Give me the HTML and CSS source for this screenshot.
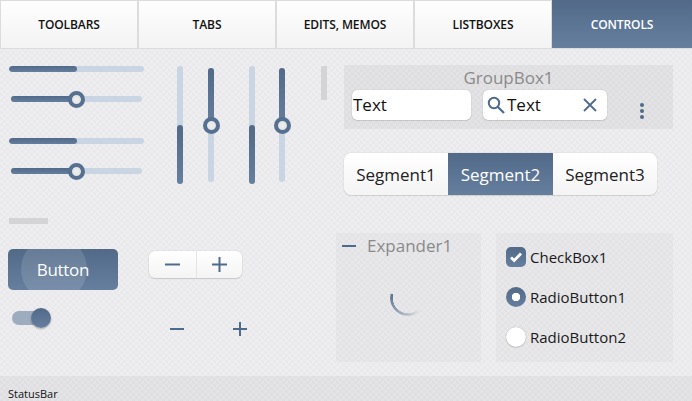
FILE: index.html
```html
<!DOCTYPE html>
<html lang="en">
<head>
<meta charset="utf-8">
<title>Controls</title>
<link rel="stylesheet" href="styles.css">
</head>
<body>
<div class="page">
  <nav class="tabs">
    <div class="tab">TOOLBARS</div>
    <div class="tab">TABS</div>
    <div class="tab">EDITS, MEMOS</div>
    <div class="tab">LISTBOXES</div>
    <div class="tab tab-active">CONTROLS</div>
  </nav>
  <main class="main">
    <section class="top-row">
      <div class="hsliders">
        <div class="progress-h"><div class="fill fill-h"></div></div>
        <div class="slider-h"><div class="fill fill-s"></div><div class="thumb"></div></div>
        <div class="progress-h gap-a"><div class="fill fill-h"></div></div>
        <div class="slider-h gap-b"><div class="fill fill-s"></div><div class="thumb"></div></div>
      </div>
      <div class="progress-v first"><div class="fill fill-v"></div></div>
      <div class="slider-v s1"><div class="fill fill-t"></div><div class="thumb"></div></div>
      <div class="progress-v p2"><div class="fill fill-v"></div></div>
      <div class="slider-v s2"><div class="fill fill-t"></div><div class="thumb"></div></div>
      <div class="scroll-v"></div>
      <div class="right-top">
        <div class="groupbox">
          <div class="group-title">GroupBox1</div>
          <div class="group-row">
            <div class="edit">Text</div>
            <div class="edit search">
              <svg class="search-ico" viewBox="0 0 18 18" width="18" height="18"><circle cx="7" cy="7" r="5.2" fill="none" stroke="#4f6b8c" stroke-width="2"/><path d="M11 11l6 6" stroke="#4f6b8c" stroke-width="2.2" fill="none"/></svg>
              <span>Text</span>
              <svg class="clear-ico" viewBox="0 0 14 14" width="14" height="14"><path d="M1 1l12 12M13 1L1 13" stroke="#4f6b8c" stroke-width="1.8" fill="none"/></svg>
            </div>
            <div class="kebab"><i></i><i></i><i></i></div>
          </div>
        </div>
        <div class="segments">
          <div class="seg">Segment1</div>
          <div class="seg seg-active">Segment2</div>
          <div class="seg">Segment3</div>
        </div>
      </div>
    </section>
    <section class="bottom-row">
      <div class="col-left">
        <div class="scroll-h"></div>
        <div class="button"><span>Button</span></div>
        <div class="switch"><div class="switch-thumb"></div></div>
      </div>
      <div class="col-mid">
        <div class="stepper">
          <div class="step"><svg viewBox="0 0 15 15" width="15" height="15"><path d="M0 7.5h15" stroke="#4f6b8c" stroke-width="2"/></svg></div>
          <div class="step step-r"><svg viewBox="0 0 15 15" width="15" height="15"><path d="M0 7.5h15M7.5 0v15" stroke="#4f6b8c" stroke-width="2"/></svg></div>
        </div>
        <div class="naked">
          <svg viewBox="0 0 14 14" width="14" height="14"><path d="M0 7h14" stroke="#4f6b8c" stroke-width="2"/></svg>
          <svg viewBox="0 0 14 14" width="14" height="14"><path d="M0 7h14M7 0v14" stroke="#4f6b8c" stroke-width="2"/></svg>
        </div>
      </div>
      <div class="expander">
        <div class="exp-head">
          <svg viewBox="0 0 14 2" width="14" height="2"><path d="M0 1h14" stroke="#4f6b8c" stroke-width="2"/></svg>
          <span>Expander1</span>
        </div>
        <div class="spinner"></div>
      </div>
      <div class="options">
        <div class="opt">
          <div class="check"><svg viewBox="0 0 14 12" width="14" height="12"><path d="M2 6.5l3.2 3L12 2.5" stroke="#fff" stroke-width="2.8" fill="none"/></svg></div>
          <span>CheckBox1</span>
        </div>
        <div class="opt">
          <div class="radio radio-on"></div>
          <span>RadioButton1</span>
        </div>
        <div class="opt">
          <div class="radio"></div>
          <span>RadioButton2</span>
        </div>
      </div>
    </section>
  </main>
  <footer class="status">StatusBar</footer>
</div>
</body>
</html>
```
FILE: styles.css
```css
* { box-sizing: border-box; }
html, body { margin: 0; height: 100%; }
body {
  font-family: "Open Sans", "Noto Sans", "Liberation Sans", sans-serif;
  color: #1a1a1a;
  overflow: hidden;
}
.page {
  width: 692px;
  height: 401px;
  display: flex;
  flex-direction: column;
  background-color: #ebebed;
  background-image: repeating-conic-gradient(#e9e9eb 0 25%, #eeeef0 0 50%);
  background-size: 6px 6px;
}

/* tabs */
.tabs { display: flex; height: 49px; flex: none; }
.tab {
  width: 138px;
  display: flex;
  align-items: center;
  justify-content: center;
  font-size: 12px;
  font-weight: 600;
  color: #111;
  background: linear-gradient(#fefefe, #f3f3f3);
  border: 1px solid #dcdcdc;
  letter-spacing: -0.1px;
}
.tab-active {
  width: 140px;
  color: #fff;
  background: linear-gradient(#526a88, #667f9f);
  border: none;
  border-bottom: 1px solid #dcdcdc;
}

/* main */
.main { flex: 1; display: flex; flex-direction: column; padding-top: 16px; min-height: 0; }
.top-row { display: flex; height: 130px; padding-left: 9px; align-items: flex-start; }
.bottom-row { display: flex; margin-top: 23px; align-items: flex-start; }

.hsliders { width: 135px; display: flex; flex-direction: column; flex: none; padding-top: 1px; }
.progress-h {
  height: 6px; border-radius: 3px; background: #c9d5e2; position: relative; overflow: hidden;
}
.slider-h {
  height: 6px; margin: 24px 2px 0; border-radius: 3px; background: #c9d5e2; position: relative;
}
.gap-a { margin-top: 36px; }
.gap-b { margin-top: 24px; }
.fill { background: linear-gradient(#526a88, #667f9f); border-radius: 3px; }
.fill-h { width: 68px; height: 100%; }
.fill-s { width: 65px; height: 100%; }
.slider-h .thumb { position: absolute; left: 57px; top: -5.5px; }
.thumb {
  width: 17px; height: 17px; border-radius: 50%;
  border: 4px solid #557090;
  background: radial-gradient(#f0f0f0, #dedede);
}
.progress-v, .slider-v { width: 6px; border-radius: 3px; background: #c9d5e2; position: relative; flex: none; }
.progress-v { height: 118px; margin-top: 1px; display: flex; align-items: flex-end; }
.slider-v { height: 114px; margin-top: 3px; }
.first { margin-left: 33px; }
.s1 { margin-left: 25px; }
.p2 { margin-left: 35px; }
.s2 { margin-left: 24px; }
.fill-v { width: 100%; height: 59px; }
.fill-t { width: 100%; height: 58px; }
.slider-v .thumb { position: absolute; top: 49px; left: -5.5px; }
.scroll-v { width: 6px; height: 34px; margin: 1px 0 0 36px; background: #d4d4d6; flex: none; }

.right-top { margin-left: 17px; display: flex; flex-direction: column; flex: none; }
.groupbox { width: 329px; height: 64px; background: rgba(0,0,0,.045); padding: 0 8px; }
.group-title { text-align: center; font-size: 17px; line-height: 25px; color: #8a8a8a; }
.group-row { display: flex; align-items: flex-start; }
.edit {
  width: 119px; height: 30px; background: #fff; border-radius: 5px;
  box-shadow: 0 0 1px rgba(0,0,0,.3), 0 1px 1px rgba(0,0,0,.1);
  font-size: 17px; line-height: 30px; padding-left: 1px; color: #111;
}
.search { width: 124px; margin-left: 12px; display: flex; align-items: center; padding-left: 4px; }
.search-ico { flex: none; margin-right: 2px; }
.search span { flex: 1; }
.clear-ico { flex: none; margin-right: 10px; }
.kebab { display: flex; flex-direction: column; gap: 2px; margin: 13px 0 0 33px; }
.kebab i { width: 4px; height: 4px; border-radius: 50%; background: #4f6b8c; display: block; }

.segments {
  width: 313px; height: 42px; margin-top: 24px; display: flex;
  background: linear-gradient(#fff, #f4f4f4); border-radius: 7px;
  box-shadow: 0 0 1px rgba(0,0,0,.3), 0 1px 1px rgba(0,0,0,.1);
  overflow: hidden;
}
.seg { flex: 1; display: flex; align-items: center; justify-content: center; font-size: 17px; color: #222; }
.seg-active { flex: none; width: 105px; color: #fff; background: linear-gradient(#526a88, #667f9f); }

/* bottom */
.col-left { width: 149px; padding-left: 8px; flex: none; display: flex; flex-direction: column; align-items: flex-start; }
.scroll-h { width: 39px; height: 6px; background: #d4d4d6; margin-left: 1px; }
.button {
  width: 110px; height: 41px; margin-top: 25px; border-radius: 5px;
  background: linear-gradient(#526a88, #667f9f); position: relative; overflow: hidden;
  display: flex; align-items: center; justify-content: center;
  color: #fff; font-size: 17px; letter-spacing: -0.3px;
}
.button::before {
  content: ""; position: absolute; left: 13px; top: -13px; width: 66px; height: 66px;
  border-radius: 50%; background: rgba(255,255,255,.12);
}
.button span { position: relative; }
.switch { width: 38px; height: 14px; margin: 21px 0 0 4px; border-radius: 7px; background: #9eacbf; position: relative; }
.switch-thumb {
  position: absolute; right: -1px; top: -3px; width: 20px; height: 20px; border-radius: 50%;
  background: linear-gradient(#526a88, #667f9f); box-shadow: 0 1px 2px rgba(0,0,0,.3);
}
.col-mid { width: 187px; flex: none; display: flex; flex-direction: column; padding-top: 33px; }
.stepper {
  width: 93px; height: 27px; display: flex; border-radius: 6px;
  background: linear-gradient(#fff, #f4f4f4);
  box-shadow: 0 0 1px rgba(0,0,0,.35), 0 1px 1px rgba(0,0,0,.12);
}
.step { width: 47px; display: flex; align-items: center; justify-content: center; }
.step-r { width: 46px; border-left: 1px solid #e4e4e4; }
.naked { display: flex; gap: 49px; margin: 44px 0 0 21px; }
.expander { width: 145px; height: 129px; margin-top: 15px; background: rgba(0,0,0,.025); padding-top: 2px; flex: none; }
.exp-head { display: flex; align-items: center; padding-left: 6px; gap: 11px; font-size: 17px; line-height: 22px; color: #8a8a8a; }
.spinner {
  width: 36px; height: 36px; margin: 23px 0 0 54px; border-radius: 50%;
  background: conic-gradient(from 135deg, transparent 0, #557090 150deg, transparent 150deg);
  -webkit-mask: radial-gradient(closest-side, transparent calc(100% - 3px), #000 calc(100% - 2.5px));
  mask: radial-gradient(closest-side, transparent calc(100% - 3px), #000 calc(100% - 2.5px));
}
.options {
  width: 177px; height: 129px; margin: 15px 0 0 15px; background: rgba(0,0,0,.025);
  padding: 9px 0 0 10px; display: flex; flex-direction: column; gap: 10px; flex: none;
}
.opt { display: flex; align-items: center; height: 30px; gap: 4px; font-size: 15px; color: #1a1a1a; }
.check {
  width: 20px; height: 20px; border-radius: 5px; background: linear-gradient(#526a88, #667f9f);
  display: flex; align-items: center; justify-content: center;
}
.radio { width: 20px; height: 20px; border-radius: 50%; background: #fff; box-shadow: 0 0 1px rgba(0,0,0,.35), 0 1px 1px rgba(0,0,0,.12); }
.radio-on {
  background: radial-gradient(circle, #fff 0 4px, transparent 4.5px), linear-gradient(#526a88, #667f9f);
  box-shadow: none;
}

.status {
  height: 25px; flex: none; background: rgba(0,0,0,.04); font-size: 11px; line-height: 17px; padding: 9px 0 0 8px; color: #111;
}
```
